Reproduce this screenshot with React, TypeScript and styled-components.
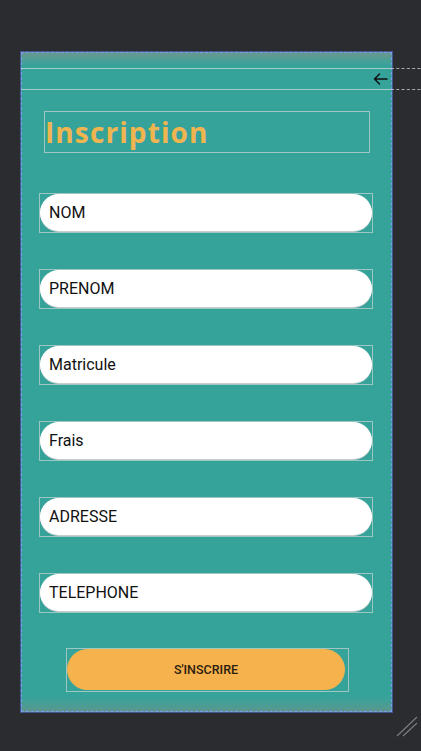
import React from "react";
import styled, { createGlobalStyle } from "styled-components";

const Global = createGlobalStyle`
  html, body { margin: 0; padding: 0; background: #2b2c30; }
  body { font-family: Roboto, "Liberation Sans", sans-serif; }
  * { box-sizing: border-box; }
`;

const Canvas = styled.div`
  width: 421px;
  height: 751px;
  padding: 52px 0 0 21px;
  display: flex;
  flex-direction: column;
  background: #2b2c30;
  overflow: hidden;
`;

const Frame = styled.div`
  width: 371px;
  height: 660px;
  border: 1px dashed #7d9cf0;
  box-shadow: 0 0 0 1px rgba(86, 124, 222, 0.55);
  background: linear-gradient(
    to bottom,
    #6a9791 0px,
    #47a097 8px,
    #36a39b 13px,
    #36a39b calc(100% - 14px),
    #4f9b93 calc(100% - 4px),
    #5c968f 100%
  );
  display: flex;
  flex-direction: column;
  padding-top: 15px;
`;

const Toolbar = styled.div`
  position: relative;
  height: 22px;
  margin-left: -1px;
  border-top: 1px solid rgba(210, 222, 220, 0.7);
  border-bottom: 1px solid rgba(210, 222, 220, 0.7);
  display: flex;
  align-items: center;
  justify-content: flex-end;
  padding-right: 3px;

  &::after {
    content: "";
    position: absolute;
    left: 100%;
    top: -1px;
    bottom: -1px;
    width: 40px;
    border-top: 1px dashed rgba(200, 204, 208, 0.8);
    border-bottom: 1px dashed rgba(200, 204, 208, 0.8);
  }
`;

const TitleBox = styled.div`
  margin: 21px 0 0 22px;
  width: 326px;
  height: 42px;
  border: 1px solid rgba(200, 214, 212, 0.7);
  display: flex;
  align-items: center;
`;

const Title = styled.h1`
  margin: 0;
  font-family: "Open Sans", Lato, sans-serif;
  font-weight: 700;
  font-size: 28px;
  line-height: 40px;
  color: #f1b550;
  letter-spacing: 1.1px;
`;

const Fields = styled.div`
  margin: 40px 0 0 17px;
  display: flex;
  flex-direction: column;
  gap: 36px;
`;

const FieldBox = styled.div`
  width: 334px;
  height: 40px;
  border: 1px solid rgba(200, 214, 212, 0.7);
  display: flex;
  align-items: stretch;
`;

const Pill = styled.div`
  flex: 1;
  margin-bottom: 1px;
  background: #fff;
  border-radius: 20px;
  box-shadow: 0 1px 0 #c9cccc;
  display: flex;
  align-items: center;
  padding-left: 9px;
  font-family: Roboto, "Liberation Sans", sans-serif;
  font-size: 16px;
  color: #111;
`;

const ButtonBox = styled.div`
  margin: 35px 0 0 44px;
  width: 283px;
  height: 44px;
  border: 1px solid rgba(200, 214, 212, 0.7);
  display: flex;
  padding: 0 3px 1px 0;
`;

const SubmitButton = styled.button`
  flex: 1;
  border: none;
  border-radius: 22px;
  background: #f6b24c;
  font-family: Roboto, "Liberation Sans", sans-serif;
  font-weight: 500;
  font-size: 12.5px;
  color: #2c2010;
  padding: 0;
  cursor: pointer;
`;

const ResizeRow = styled.div`
  width: 397px;
  display: flex;
  justify-content: flex-end;
  margin-top: 4px;
`;

const fields = ["NOM", "PRENOM", "Matricule", "Frais", "ADRESSE", "TELEPHONE"];

export default function App() {
  return (
    <>
      <Global />
      <Canvas>
        <Frame>
          <Toolbar>
            <svg width="16" height="16" viewBox="0 0 16 16" fill="none">
              <path
                d="M15 8H2.5M7.5 3L2.5 8l5 5"
                stroke="#111"
                strokeWidth="1.5"
                strokeLinecap="round"
                strokeLinejoin="round"
              />
            </svg>
          </Toolbar>
          <TitleBox>
            <Title>Inscription</Title>
          </TitleBox>
          <Fields>
            {fields.map((f) => (
              <FieldBox key={f}>
                <Pill>{f}</Pill>
              </FieldBox>
            ))}
          </Fields>
          <ButtonBox>
            <SubmitButton>S'INSCRIRE</SubmitButton>
          </ButtonBox>
        </Frame>
        <ResizeRow>
          <svg width="22" height="21" viewBox="0 0 22 21" fill="none">
            <path d="M1 20L21 1M7 20L21 7" stroke="#7a7c82" strokeWidth="1.2" />
          </svg>
        </ResizeRow>
      </Canvas>
    </>
  );
}
